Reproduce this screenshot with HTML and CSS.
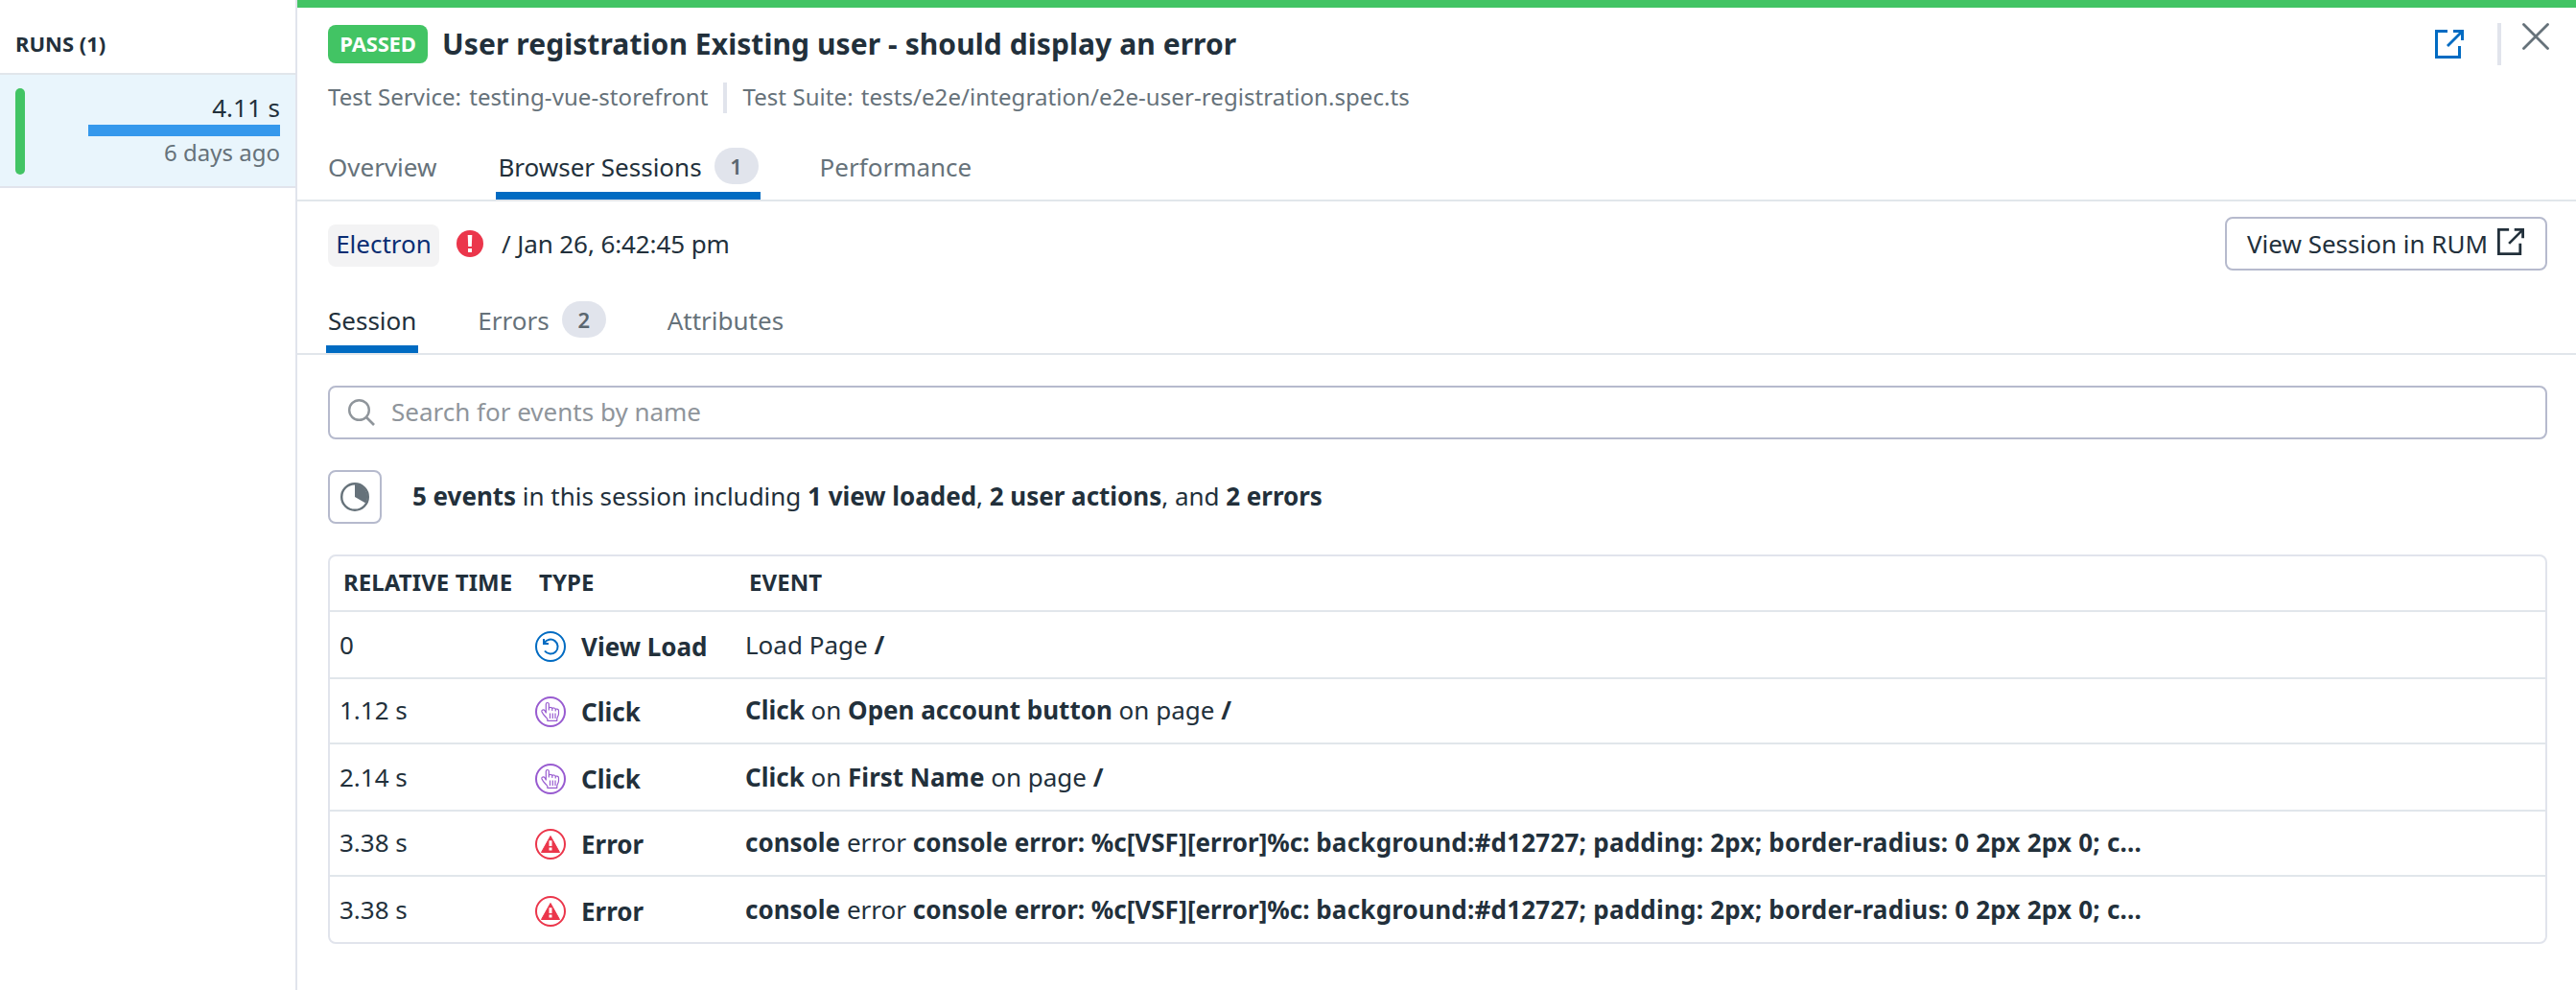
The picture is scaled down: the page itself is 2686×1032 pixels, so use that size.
FILE: index.html
```html
<!DOCTYPE html>
<html lang="en">
<head>
<meta charset="utf-8">
<title>Test run</title>
<link rel="stylesheet" href="styles.css">
</head>
<body>
<svg class="sprite" aria-hidden="true">
  <symbol id="external" viewBox="0 0 30 30">
    <path d="M13 1.500H1.500v27h24V17" fill="none" stroke="currentColor" stroke-width="3"/>
    <path d="M19 1.500h9.500V11" fill="none" stroke="currentColor" stroke-width="3"/>
    <path d="M13 17 28 2" fill="none" stroke="currentColor" stroke-width="2.800"/>
  </symbol>
  <symbol id="click" viewBox="0 0 32 32">
    <circle cx="16" cy="16" r="15" fill="none" stroke="currentColor" stroke-width="2"/>
    <path d="M11.300 17.500V8a1.500 1.500 0 0 1 3 0v6v-1.400c0-1.600 3.300-1.600 3.500.2v1.700V13c.2-1.500 3.200-1.300 3.400.3V15v-1.200c.3-1.300 3.300-1 3.300 1V18c0 2.500-1.700 3.500-1.700 5.500v1.800h-10v-1.800C11 21 8.500 19.500 7 16c-.8-2 2-2.800 3-1.200l1.300 2.200M15.500 17.500V23M18.300 17.500V23M21 17.500V23" fill="none" stroke="currentColor" stroke-width="1.200" stroke-linejoin="round"/>
  </symbol>
  <symbol id="error" viewBox="0 0 32 32">
    <circle cx="16" cy="16" r="15" fill="none" stroke="currentColor" stroke-width="2"/>
    <path d="M16 7.500 25.500 24.500H6.500Z" fill="currentColor" stroke="currentColor" stroke-linejoin="round"/>
    <path d="M16 12.300V18M16 19.600v3" stroke="#fff" stroke-width="3"/>
  </symbol>
</svg>
<div class="app">
  <aside class="runs">
    <h2 class="runs-title">RUNS (1)</h2>
    <div class="run">
      <span class="run-status"></span>
      <div class="run-info">
        <span class="run-time">4.11 s</span>
        <span class="run-bar"></span>
        <span class="run-age">6 days ago</span>
      </div>
    </div>
  </aside>
  <main class="panel">
    <header class="head">
      <div class="head-main">
        <div class="title-row">
          <span class="passed">PASSED</span>
          <h1 class="title">User registration Existing user - should display an error</h1>
        </div>
        <div class="meta">
          <span>Test Service:</span><span class="meta-value">testing-vue-storefront</span>
          <i class="meta-sep"></i>
          <span>Test Suite:</span><span class="meta-value">tests/e2e/integration/e2e-user-registration.spec.ts</span>
        </div>
      </div>
      <div class="head-actions">
        <svg class="open-icon"><use href="#external"/></svg>
        <i class="action-sep"></i>
        <svg class="close-icon" viewBox="0 0 28 28"><path d="M1.500 1.500l25 25M26.500 1.500l-25 25" stroke="currentColor" stroke-width="2.800" stroke-linecap="round"/></svg>
      </div>
    </header>
    <nav class="tabs">
      <a class="tab">Overview</a>
      <a class="tab active">Browser Sessions<span class="count">1</span></a>
      <a class="tab">Performance</a>
    </nav>
    <div class="session-bar">
      <span class="browser">Electron</span>
      <svg class="alert-icon" viewBox="0 0 28 28"><circle cx="14" cy="14" r="14" fill="#eb364b"/><path d="M11.700 5h4.600l-.5 12h-3.600zM12 19h4v4h-4z" fill="#fff"/></svg>
      <span class="session-date">/ Jan 26, 6:42:45 pm</span>
      <button class="rum">View Session in RUM<svg class="rum-icon"><use href="#external"/></svg></button>
    </div>
    <nav class="tabs subtabs">
      <a class="tab active">Session</a>
      <a class="tab">Errors<span class="count">2</span></a>
      <a class="tab">Attributes</a>
    </nav>
    <section class="content">
      <div class="search">
        <svg class="search-icon" viewBox="0 0 28 28"><circle cx="11.500" cy="11.500" r="10.300" fill="none" stroke="currentColor" stroke-width="2.400"/><path d="M19 19l8 8" stroke="currentColor" stroke-width="2.600"/></svg>
        <span class="placeholder">Search for events by name</span>
      </div>
      <div class="summary">
        <span class="pie"><svg class="pie-icon" viewBox="0 0 30 30"><circle cx="15" cy="15" r="13.800" fill="none" stroke="currentColor" stroke-width="2.400"/><path d="M15 15V2a13 13 0 0 1 11.300 19.500Z" fill="currentColor"/></svg></span>
        <p class="summary-text"><b>5 events</b> in this session including <b>1 view loaded</b>, <b>2 user actions</b>, and <b>2 errors</b></p>
      </div>
      <div class="events">
        <div class="row header"><span>RELATIVE TIME</span><span>TYPE</span><span>EVENT</span></div>
        <div class="row tall"><span>0</span><span class="type load"><svg class="type-icon" viewBox="0 0 32 32"><g fill="none" stroke="currentColor" stroke-width="2"><circle cx="16" cy="16" r="15"/><path d="M9.500 12.500a7.500 7.500 0 1 1 .5 8M9 8v5h5"/></g></svg>View Load</span><span>Load Page <b>/</b></span></div>
        <div class="row"><span>1.12 s</span><span class="type action"><svg class="type-icon"><use href="#click"/></svg>Click</span><span><b>Click</b> on <b>Open account button</b> on page <b>/</b></span></div>
        <div class="row tall"><span>2.14 s</span><span class="type action"><svg class="type-icon"><use href="#click"/></svg>Click</span><span><b>Click</b> on <b>First Name</b> on page <b>/</b></span></div>
        <div class="row"><span>3.38 s</span><span class="type fail"><svg class="type-icon"><use href="#error"/></svg>Error</span><span><b>console</b> error <b>console error: %c[VSF][error]%c: <span class="css-text">background:#d12727; padding: 2px; border-radius: 0 2px 2px 0; c...</span></b></span></div>
        <div class="row tall"><span>3.38 s</span><span class="type fail"><svg class="type-icon"><use href="#error"/></svg>Error</span><span><b>console</b> error <b>console error: %c[VSF][error]%c: <span class="css-text">background:#d12727; padding: 2px; border-radius: 0 2px 2px 0; c...</span></b></span></div>
      </div>
    </section>
  </main>
</div>
</body>
</html>
```
FILE: styles.css
```css
* { box-sizing: border-box; }
body {
  margin: 0;
  background: #fff;
  color: #22303b;
  font: 26px/36px "Noto Sans", sans-serif;
  white-space: nowrap;
}
h1, h2, p { margin: 0; }
svg { display: block; flex: none; }
.sprite { position: absolute; width: 0; height: 0; }

.app { display: flex; height: 1032px; overflow: hidden; }

.runs { flex: none; width: 310px; border-right: 2px solid #e1e4ec; }
.runs-title {
  height: 78px;
  padding: 30px 16px 0;
  border-bottom: 2px solid #e1e6eb;
  font-size: 22px;
  line-height: 30px;
}
.run {
  display: flex;
  height: 118px;
  padding: 14px 16px 12px;
  background: #e9f5fc;
  border-bottom: 2px solid #e1e4ec;
}
.run-status { width: 10px; height: 90px; border-radius: 5px; background: #42c464; }
.run-info { display: flex; flex: 1; flex-direction: column; align-items: flex-end; }
.run-time { height: 38px; line-height: 40px; }
.run-bar { width: 200px; height: 12px; background: #3598ec; }
.run-age { color: #66727a; font-size: 24px; line-height: 33px; }

.panel { flex: 1; min-width: 0; border-top: 8px solid #42c464; }

.head { display: flex; justify-content: space-between; height: 124px; padding: 16px 28px 0 32px; }
.title-row { display: flex; align-items: center; gap: 15px; height: 44px; }
.passed {
  width: 104px;
  height: 40px;
  border-radius: 8px;
  background: #42c464;
  color: #fff;
  font-size: 22px;
  font-weight: 700;
  letter-spacing: -.2px;
  line-height: 39px;
  text-align: center;
}
.title { font-size: 30px; letter-spacing: .08px; line-height: 44px; }
.meta {
  display: flex;
  align-items: center;
  height: 32px;
  margin-top: 18px;
  color: #66727a;
  font-size: 24px;
  letter-spacing: .08px;
}
.meta span { padding-bottom: 3px; }
.meta-value { margin-left: 8px; }
.meta-sep { width: 4px; height: 32px; margin: 0 16px; background: #e1e4ec; }
.head-actions { display: flex; align-items: flex-start; }
.open-icon { width: 30px; height: 30px; margin-top: 7px; color: #006bc2; }
.action-sep { width: 4px; height: 44px; margin: 0 22px 0 35px; background: #e1e4ec; }
.close-icon { width: 28px; height: 28px; color: #66727a; }

.tabs { display: flex; gap: 60px; height: 78px; padding: 0 30px; border-bottom: 2px solid #e1e6eb; color: #66727a; }
.tab { display: flex; align-items: center; height: 76px; padding: 16px 2px 0; border-bottom: 8px solid transparent; }
.tab.active { border-color: #006bc2; color: #22303b; }
.count {
  width: 46px;
  height: 38px;
  margin: -2px 0 0 13px;
  border-radius: 19px;
  background: #e1e4ec;
  color: #5a666f;
  font-size: 22px;
  font-weight: 600;
  line-height: 38px;
  text-align: center;
}

.session-bar { display: flex; align-items: center; height: 92px; padding: 0 30px 0 32px; }
.browser {
  width: 116px;
  height: 44px;
  border-radius: 8px;
  background: #f3f3f4;
  color: #0a2e73;
  line-height: 40px;
  text-align: center;
}
.alert-icon { width: 28px; height: 28px; margin: -4px 19px 0 18px; }
.session-date { margin-top: -4px; letter-spacing: -.1px; }
.rum {
  display: flex;
  align-items: center;
  width: 336px;
  height: 56px;
  margin: -4px 0 0 auto;
  padding: 0 0 0 21px;
  border: 2px solid #b6bacd;
  border-radius: 8px;
  background: #fff;
  color: inherit;
  font: inherit;
}
.rum-icon { width: 28px; height: 28px; margin: -4px 0 0 10px; }
.subtabs { height: 68px; }
.subtabs .tab { height: 66px; padding-top: 6px; }

.content { padding: 32px 30px 0 32px; }
.search {
  display: flex;
  align-items: center;
  gap: 17px;
  height: 56px;
  padding: 0 19px;
  border: 2px solid #b6bacd;
  border-radius: 8px;
  color: #8f959b;
}
.search-icon { width: 28px; height: 28px; }
.placeholder { padding-bottom: 2px; }
.summary { display: flex; align-items: center; gap: 32px; margin: 32px 0; }
.summary-text { padding-bottom: 2px; letter-spacing: -.02px; }
.pie {
  display: grid;
  place-items: center;
  width: 56px;
  height: 56px;
  border: 2px solid #b6bacd;
  border-radius: 8px;
  color: #66727a;
}
.pie-icon { width: 30px; height: 30px; }

.events { border: 2px solid #e1e4ec; border-radius: 8px; }
.row {
  display: grid;
  grid-template-columns: 204px 219px 1fr;
  align-items: center;
  height: 68px;
  padding: 0 10px 2px;
  border-bottom: 2px solid #e1e6eb;
}
.row.tall { height: 70px; padding-bottom: 0; }
.row:last-child { height: 68px; border-bottom: 0; }
.row.header { height: 58px; padding: 0 0 3px 14px; font-size: 24px; font-weight: 700; letter-spacing: .08px; }
.type { display: flex; align-items: center; gap: 16px; padding-top: 4px; font-weight: 700; }
.type-icon { width: 32px; height: 32px; }
.load .type-icon { color: #006bc2; }
.action .type-icon { color: #985bd0; }
.fail .type-icon { color: #eb364b; }
.css-text { letter-spacing: .22px; }
```
